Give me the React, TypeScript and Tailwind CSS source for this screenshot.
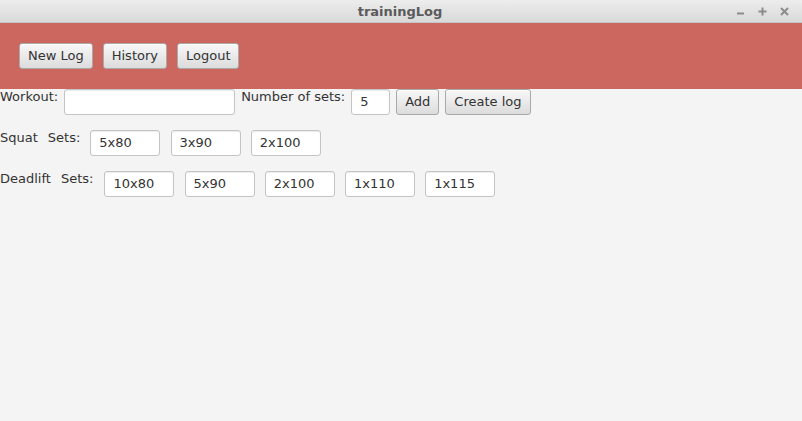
import React from 'react'

// ============================================================================
// TRAINING LOG - window with header bar and set entry rows
// ============================================================================

const font = { fontFamily: '"DejaVu Sans", Verdana, sans-serif' }

function FxButton({ label }: { label: string }) {
  return (
    <button className="h-[26px] px-[8px] rounded-[3px] border border-[#a9a9a9] bg-gradient-to-b from-[#f8f8f8] to-[#dcdcdc] text-[13px] leading-[16px] text-[#333] shadow-[inset_0_1px_0_#ffffff]">
      {label}
    </button>
  )
}

function FxField({ value, width }: { value: string; width: string }) {
  return (
    <div
      className={`${width} h-[26px] px-[8px] flex items-center rounded-[3px] border border-[#c4c4c4] bg-white text-[13px] leading-[16px] text-[#333] shadow-[inset_0_1px_1px_#ececec]`}
    >
      {value}
    </div>
  )
}

function SetRow({ name, sets, space }: { name: string; sets: string[]; space: string }) {
  return (
    <div className="flex items-start h-[26px]">
      <span className="text-[13px] leading-[16px] text-[#333] mr-[10px]">{name}</span>
      <span className={`text-[13px] leading-[16px] text-[#333] ${space}`}>Sets:</span>
      <div className="flex gap-[10.2px]">
        {sets.map((s) => (
          <FxField key={s} value={s} width="w-[70px]" />
        ))}
      </div>
    </div>
  )
}

export default function App() {
  return (
    <div className="w-[802px] h-[421px] bg-[#f4f4f4] flex flex-col overflow-hidden" style={font}>
      {/* title bar */}
      <div className="h-[23px] shrink-0 relative flex items-center justify-center bg-gradient-to-b from-[#ededed] to-[#d9d9d9] border-b border-[#c6c6c6]">
        <span className="text-[13px] font-bold text-[#5b5b5b] leading-none ml-[-2px]">trainingLog</span>
        <div className="absolute right-[12px] top-[6px] flex items-center gap-[11px]">
          <svg width="11" height="11" viewBox="0 0 11 11">
            <path d="M2 7.5h7" stroke="#8c8c8c" strokeWidth="2" />
          </svg>
          <svg width="11" height="11" viewBox="0 0 11 11">
            <path d="M1.5 5.5h8M5.5 1.5v8" stroke="#8c8c8c" strokeWidth="2" />
          </svg>
          <svg width="11" height="11" viewBox="0 0 11 11">
            <path d="M2 2l7 7M9 2l-7 7" stroke="#8c8c8c" strokeWidth="2" />
          </svg>
        </div>
      </div>

      {/* header */}
      <div className="h-[66px] shrink-0 bg-[#cb675f] flex items-center gap-[10px] pl-[19px]">
        <FxButton label="New Log" />
        <FxButton label="History" />
        <FxButton label="Logout" />
      </div>

      {/* content */}
      <div className="flex flex-col gap-[15px] text-[#333]">
        <div className="flex items-start gap-[6px] h-[26px]">
          <span className="text-[13px] leading-[16px]">Workout:</span>
          <FxField value="" width="w-[171px]" />
          <span className="text-[13px] leading-[16px]">Number of sets:</span>
          <FxField value="5" width="w-[39px]" />
          <FxButton label="Add" />
          <FxButton label="Create log" />
        </div>
        <SetRow name="Squat" sets={['5x80', '3x90', '2x100']} space="mr-[10px]" />
        <SetRow name="Deadlift" sets={['10x80', '5x90', '2x100', '1x110', '1x115']} space="mr-[11px]" />
      </div>
    </div>
  )
}
